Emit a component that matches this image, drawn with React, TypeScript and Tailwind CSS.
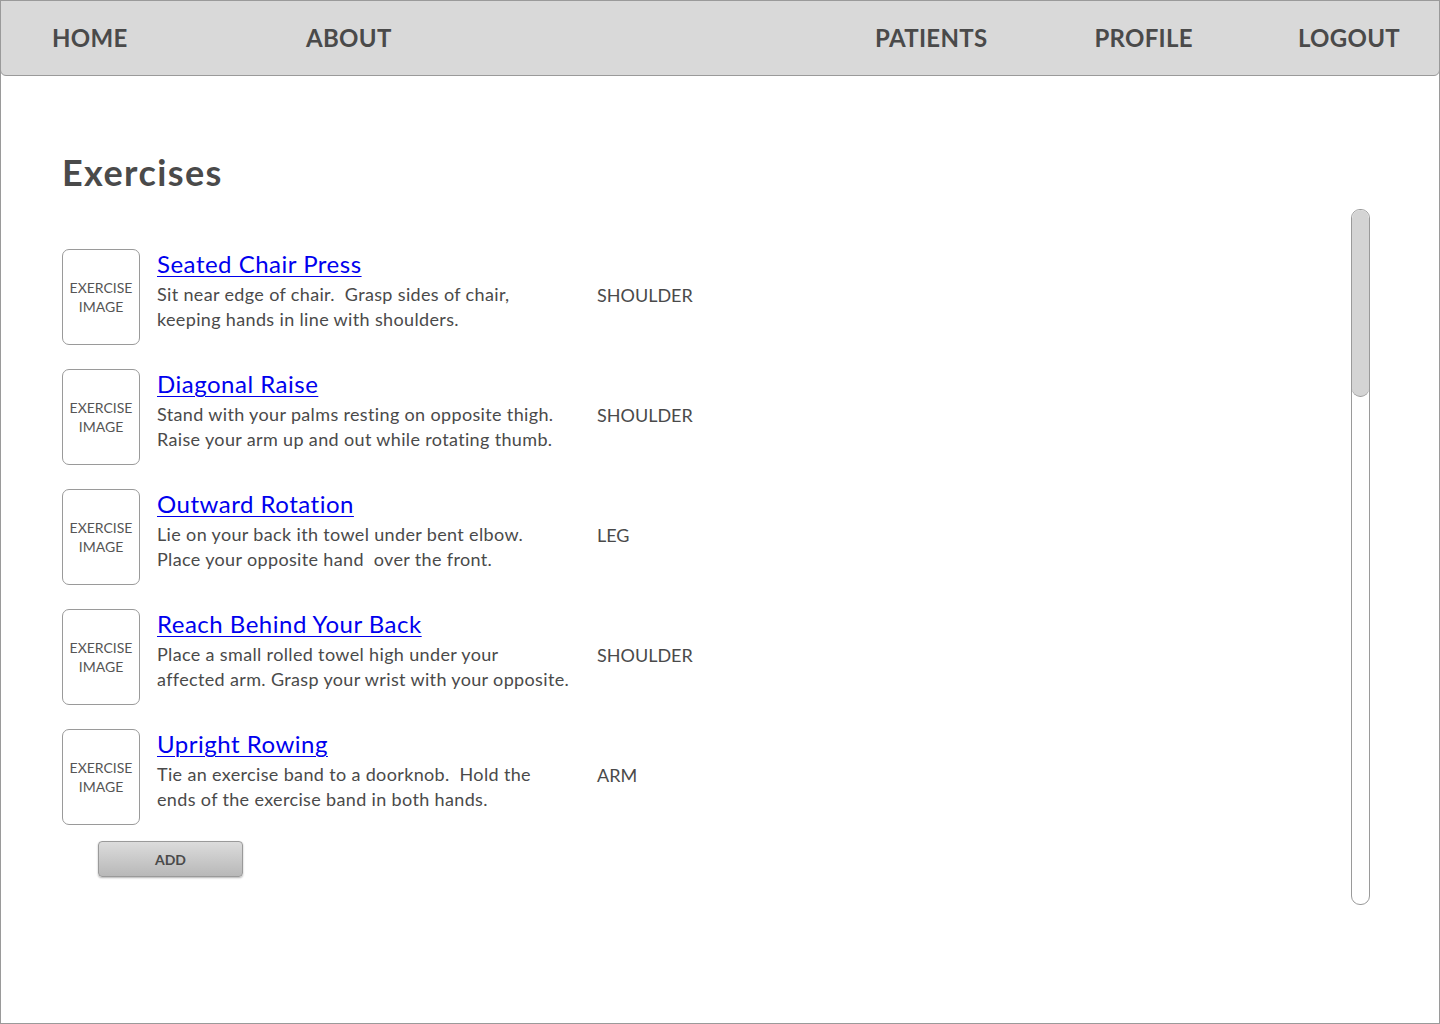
import React from "react";

const exercises = [
  { title: "Seated Chair Press", lines: ["Sit near edge of chair.  Grasp sides of chair,", "keeping hands in line with shoulders."], cat: "SHOULDER" },
  { title: "Diagonal Raise", lines: ["Stand with your palms resting on opposite thigh.", "Raise your arm up and out while rotating thumb."], cat: "SHOULDER" },
  { title: "Outward Rotation", lines: ["Lie on your back ith towel under bent elbow.", "Place your opposite hand  over the front."], cat: "LEG" },
  { title: "Reach Behind Your Back", lines: ["Place a small rolled towel high under your", "affected arm. Grasp your wrist with your opposite."], cat: "SHOULDER" },
  { title: "Upright Rowing", lines: ["Tie an exercise band to a doorknob.  Hold the", "ends of the exercise band in both hands."], cat: "ARM" },
];

export default function App() {
  return (
    <div
      className="w-[1440px] h-[1024px] bg-white border border-[#9a9a9a] text-[#4a4a4a] overflow-hidden"
      style={{ fontFamily: "Lato, 'Noto Sans', sans-serif" }}
    >
      <nav className="h-[76px] -mx-px -mt-px bg-[#d9d9d9] border border-[#9a9a9a] rounded-b-[6px] flex items-center text-[24px] font-bold tracking-[0.3px] text-[#4a4a4a]">
        <span className="ml-[51px] w-[254px]">HOME</span>
        <span>ABOUT</span>
        <span className="ml-auto">PATIENTS</span>
        <span className="ml-[107px]">PROFILE</span>
        <span className="ml-[105px] mr-[39px]">LOGOUT</span>
      </nav>
      <div className="flex">
        <main className="pl-[61px] flex-1">
          <h1 className="mt-[74px] text-[36px] font-bold leading-[44px] tracking-[1.4px] text-[#4a4a4a]">Exercises</h1>
          <div className="mt-[55px] flex flex-col gap-[24px]">
            {exercises.map((e) => (
              <div key={e.title} className="flex">
                <div className="w-[78px] h-[96px] border border-[#9a9a9a] rounded-[7px] flex flex-col items-center justify-center text-[14px] leading-[19px] text-[#555] text-center">
                  <span>EXERCISE</span>
                  <span>IMAGE</span>
                </div>
                <div className="ml-[17px] w-[440px]">
                  <a href="#" className="block text-[24px] leading-[30px] tracking-[0.5px] text-[#0000ee] underline decoration-1 underline-offset-[3px]">
                    {e.title}
                  </a>
                  <p className="text-[18px] leading-[25px] tracking-[0.35px] whitespace-pre text-[#4a4a4a] mt-[3px]">
                    {e.lines[0]}
                    <br />
                    {e.lines[1]}
                  </p>
                </div>
                <div className="text-[18px] leading-[25px] mt-[34px] text-[#4a4a4a]">{e.cat}</div>
              </div>
            ))}
          </div>
          <button className="mt-[16px] ml-[36px] w-[145px] h-[36px] rounded-[4px] border border-[#9a9a9a] bg-gradient-to-b from-[#dcdcdc] to-[#b8b8b8] shadow-[0_1px_2px_rgba(0,0,0,0.3)] text-[14px] font-bold text-[#4a4a4a]">
            ADD
          </button>
        </main>
        <div className="mr-[69px] mt-[133px] w-[19px] h-[696px] border border-[#9a9a9a] rounded-[9px] overflow-hidden">
          <div className="h-[187px] bg-[#d4d4d4] border-b border-[#9a9a9a] rounded-[9px]" />
        </div>
      </div>
    </div>
  );
}
